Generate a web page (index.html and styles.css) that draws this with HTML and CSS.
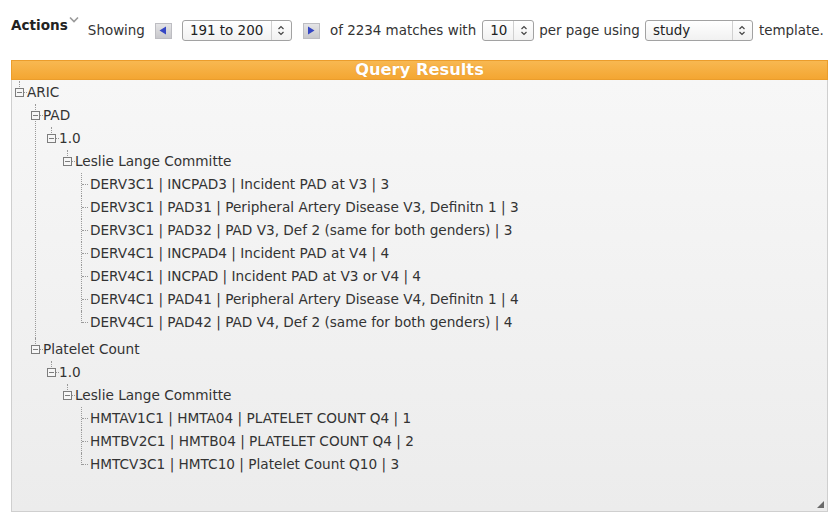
FILE: index.html
```html
<!DOCTYPE html>
<html>
<head>
<meta charset="utf-8">
<link rel="stylesheet" href="styles.css">
</head>
<body>
<div class="toolbar">
  <span class="actions">Actions<svg class="chev" width="10" height="7" viewBox="0 0 10 7"><polyline points="1,1.5 5,5.5 9,1.5" fill="none" stroke="#9a9a9a" stroke-width="1.6"/></svg></span>
  <span class="txt showing">Showing</span>
  <span class="navbtn prev"><svg width="8" height="9" viewBox="0 0 8 9"><polygon points="7,0.5 7,8.5 0.5,4.5" fill="#3546c4"/></svg></span>
  <span class="sel sel-range"><span class="sel-val">191 to 200</span><span class="sel-arr"><svg width="8" height="11" viewBox="0 0 8 11"><polyline points="1.5,4 4,1.5 6.5,4" fill="none" stroke="#444" stroke-width="1.2"/><polyline points="1.5,7 4,9.5 6.5,7" fill="none" stroke="#444" stroke-width="1.2"/></svg></span></span>
  <span class="navbtn next"><svg width="8" height="9" viewBox="0 0 8 9"><polygon points="1,0.5 1,8.5 7.5,4.5" fill="#3546c4"/></svg></span>
  <span class="txt of">of 2234 matches with</span>
  <span class="sel sel-num"><span class="sel-val">10</span><span class="sel-arr"><svg width="8" height="11" viewBox="0 0 8 11"><polyline points="1.5,4 4,1.5 6.5,4" fill="none" stroke="#444" stroke-width="1.2"/><polyline points="1.5,7 4,9.5 6.5,7" fill="none" stroke="#444" stroke-width="1.2"/></svg></span></span>
  <span class="txt per">per page using</span>
  <span class="sel sel-tpl"><span class="sel-val">study</span><span class="sel-arr"><svg width="8" height="11" viewBox="0 0 8 11"><polyline points="1.5,4 4,1.5 6.5,4" fill="none" stroke="#444" stroke-width="1.2"/><polyline points="1.5,7 4,9.5 6.5,7" fill="none" stroke="#444" stroke-width="1.2"/></svg></span></span>
  <span class="txt tpl">template.</span>
</div>

<div class="panel">
  <div class="panel-head">Query Results</div>
  <div class="panel-body">
    <ul class="tree root">
      <li><div class="row"><span class="tog"></span><span class="hl"></span><span class="lbl">ARIC</span></div>
        <ul class="tree">
          <li class="grp-pad"><div class="row"><span class="tog"></span><span class="hl"></span><span class="lbl">PAD</span></div>
            <ul class="tree">
              <li><div class="row"><span class="tog"></span><span class="hl"></span><span class="lbl">1.0</span></div>
                <ul class="tree">
                  <li><div class="row"><span class="tog"></span><span class="hl"></span><span class="lbl">Leslie Lange Committe</span></div>
                    <ul class="tree leaves">
                      <li class="leaf"><div class="row">DERV3C1 | INCPAD3 | Incident PAD at V3 | 3</div></li>
                      <li class="leaf"><div class="row">DERV3C1 | PAD31 | Peripheral Artery Disease V3, Definitn 1 | 3</div></li>
                      <li class="leaf"><div class="row">DERV3C1 | PAD32 | PAD V3, Def 2 (same for both genders) | 3</div></li>
                      <li class="leaf"><div class="row">DERV4C1 | INCPAD4 | Incident PAD at V4 | 4</div></li>
                      <li class="leaf"><div class="row">DERV4C1 | INCPAD | Incident PAD at V3 or V4 | 4</div></li>
                      <li class="leaf"><div class="row">DERV4C1 | PAD41 | Peripheral Artery Disease V4, Definitn 1 | 4</div></li>
                      <li class="leaf"><div class="row">DERV4C1 | PAD42 | PAD V4, Def 2 (same for both genders) | 4</div></li>
                    </ul>
                  </li>
                </ul>
              </li>
            </ul>
          </li>
          <li><div class="row"><span class="tog"></span><span class="hl"></span><span class="lbl">Platelet Count</span></div>
            <ul class="tree">
              <li><div class="row"><span class="tog"></span><span class="hl"></span><span class="lbl">1.0</span></div>
                <ul class="tree">
                  <li><div class="row"><span class="tog"></span><span class="hl"></span><span class="lbl">Leslie Lange Committe</span></div>
                    <ul class="tree leaves">
                      <li class="leaf"><div class="row">HMTAV1C1 | HMTA04 | PLATELET COUNT Q4 | 1</div></li>
                      <li class="leaf"><div class="row">HMTBV2C1 | HMTB04 | PLATELET COUNT Q4 | 2</div></li>
                      <li class="leaf"><div class="row">HMTCV3C1 | HMTC10 | Platelet Count Q10 | 3</div></li>
                    </ul>
                  </li>
                </ul>
              </li>
            </ul>
          </li>
        </ul>
      </li>
    </ul>
    <span class="grip"></span>
  </div>
</div>
</body>
</html>
```

FILE: styles.css
```css
html, body {
  margin: 0;
  padding: 0;
  background: #ffffff;
}
body {
  font-family: "DejaVu Sans", "Liberation Sans", sans-serif;
  font-size: 13.65px;
  color: #333333;
  width: 836px;
  height: 518px;
  overflow: hidden;
}

/* toolbar */
.toolbar {
  display: flex;
  align-items: center;
  height: 21px;
  margin-top: 20px;
  padding-left: 11px;
  white-space: nowrap;
  font-size: 13.45px;
}
.actions {
  align-self: flex-start;
  margin-top: -1px;
  font-weight: bold;
  font-size: 13.6px;
  color: #222222;
  line-height: 13px;
  display: flex;
  align-items: flex-start;
}
.chev {
  margin-left: 1px;
  margin-top: -3px;
}
.txt {
  line-height: 21px;
}
.showing { margin-left: 9px; }
.navbtn {
  width: 17px;
  height: 16px;
  box-sizing: border-box;
  background: linear-gradient(#e4e4e6, #c8c8cc);
  border: 1px solid #bdbdc2;
  display: flex;
  align-items: center;
  justify-content: center;
}
.prev { margin-left: 10px; }
.next { margin-left: 11px; }
.sel {
  height: 21px;
  box-sizing: border-box;
  border: 1px solid #a2a2a2;
  border-radius: 3px;
  background: linear-gradient(#ffffff, #f1f1f1);
  display: flex;
  align-items: center;
  color: #222222;
}
.sel-val {
  flex: 1;
  padding-left: 7px;
  line-height: 19px;
}
.sel-arr {
  width: 19px;
  height: 19px;
  border-left: 1px solid #d0d0d0;
  display: flex;
  align-items: center;
  justify-content: center;
}
.sel-range { width: 110px; margin-left: 10px; }
.of { margin-left: 10px; }
.sel-num { width: 52px; margin-left: 6px; }
.per { margin-left: 5px; }
.sel-tpl { width: 108px; margin-left: 5px; }
.tpl { margin-left: 6px; }

/* panel */
.panel {
  margin: 19px 8px 0 11px;
  width: 817px;
  height: 452px;
  box-sizing: border-box;
  border: 1px solid #cfcfcf;
  display: flex;
  flex-direction: column;
}
.panel-head {
  height: 20px;
  box-sizing: border-box;
  margin: -1px -1px 0 -1px;
  background: linear-gradient(#f8b851, #f4a632);
  border: 1px solid #eb9d2c;
  color: #ffffff;
  font-weight: bold;
  font-size: 16.3px;
  line-height: 18px;
  text-align: center;
  text-shadow: 0 0 1px rgba(200, 110, 0, 0.5);
}
.panel-body {
  flex: 1;
  position: relative;
  background: linear-gradient(#f7f7f7, #ececec);
  padding-left: 3px;
  padding-top: 1px;
}

/* tree */
.tree {
  list-style: none;
  margin: 0;
  padding: 0;
}
.tree .tree {
  padding-left: 16px;
}
.tree li {
  position: relative;
}
.tree li::before {
  content: "";
  position: absolute;
  left: 4px;
  top: 0;
  bottom: 0;
  border-left: 1px dotted #9a9a9a;
}
.tree li:last-child::before {
  bottom: auto;
  height: 12px;
}
.row {
  height: 23px;
  line-height: 23px;
  display: flex;
  align-items: center;
  position: relative;
  color: #333333;
  white-space: nowrap;
}
.tog {
  width: 9px;
  height: 9px;
  box-sizing: border-box;
  border: 1px solid #7d7d7d;
  background: #f6f6f6 linear-gradient(#7d7d7d, #7d7d7d) no-repeat center / 5px 1px;
  position: relative;
  z-index: 1;
  flex: none;
}
.hl {
  width: 3px;
  border-top: 1px dotted #9a9a9a;
  flex: none;
}
.grp-pad {
  padding-bottom: 4px;
}
.tree .leaves {
  padding-left: 16px;
}
.leaf::before {
  left: 2px !important;
}
.leaf .row {
  padding-left: 11px;
}
.leaf .row::after {
  content: "";
  position: absolute;
  left: 3px;
  width: 6px;
  top: 11px;
  border-top: 1px dotted #9a9a9a;
}
.grip {
  position: absolute;
  right: 3px;
  bottom: 3px;
  width: 0;
  height: 0;
  border-left: 7px solid transparent;
  border-bottom: 7px solid #6a6a6a;
}
```
